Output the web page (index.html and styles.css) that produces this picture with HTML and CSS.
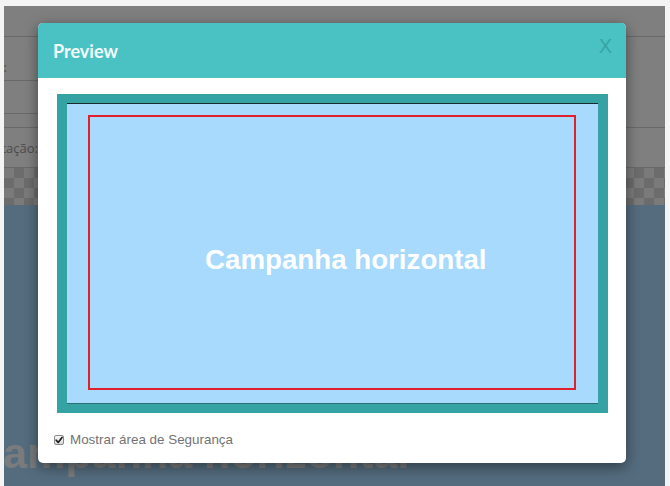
FILE: index.html
```html
<!DOCTYPE html>
<html lang="pt">
<head>
<meta charset="utf-8">
<title>Preview</title>
<link rel="stylesheet" href="styles.css">
</head>
<body>
<div class="app">
  <div class="page">
    <div class="topbar"></div>
    <div class="section-a">
      <div class="fields">
        <div class="field field-1"><span class="clip clip-1"><span>Nome:</span></span></div>
        <div class="field field-2"></div>
      </div>
    </div>
    <div class="section-b"><span class="clip clip-2"><span>Segmentação:</span></span></div>
    <div class="checker"></div>
    <div class="canvas"><div class="canvas-title">Campanha horizontal</div></div>
  </div>
  <div class="overlay">
    <div class="modal">
      <div class="modal-header">
        <h2 class="modal-title">Preview</h2>
        <span class="close">X</span>
      </div>
      <div class="modal-body">
        <div class="frame">
          <div class="stage">
            <div class="safe">
              <div class="title">Campanha horizontal</div>
            </div>
          </div>
        </div>
        <label class="option">
          <svg class="check" width="10" height="10" viewBox="0 0 10 10">
            <defs>
              <linearGradient id="cb" x1="0" y1="0" x2="0" y2="1">
                <stop offset="0" stop-color="#fafafa"/>
                <stop offset="1" stop-color="#d8d8d8"/>
              </linearGradient>
            </defs>
            <rect x="0.5" y="0.5" width="9" height="9" rx="1.5" fill="url(#cb)" stroke="#8a8a8a"/>
            <path d="M2.2 5.2 L4.2 7.4 L8 2.4" fill="none" stroke="#1e1e1e" stroke-width="1.7" stroke-linecap="round" stroke-linejoin="round"/>
          </svg>
          <span class="option-text">Mostrar área de Segurança</span>
        </label>
      </div>
    </div>
  </div>
</div>
</body>
</html>
```
FILE: styles.css
```css
html, body {
  margin: 0;
  padding: 0;
}
body {
  background: #f4f4f4;
  font-family: "Liberation Sans", Arial, sans-serif;
}
.app {
  position: relative;
  margin: 6px 5px 0 4px;
  height: 480px;
  overflow: hidden;
  background: #ffffff;
}
.page {
  display: flex;
  flex-direction: column;
  height: 100%;
}
.topbar {
  height: 30px;
  border-bottom: 1px solid #d2d2d2;
  flex: none;
}
.section-a {
  height: 90px;
  border-bottom: 1px solid #d2d2d2;
  flex: none;
}
.fields {
  width: 420px;
}
.field {
  border-bottom: 1px solid #d2d2d2;
  display: flex;
}
.field-1 {
  height: 43px;
  align-items: flex-end;
}
.field-2 {
  height: 32px;
}
.clip {
  display: flex;
  justify-content: flex-end;
  white-space: nowrap;
  font-family: "Open Sans", sans-serif;
  font-size: 13px;
  line-height: 15px;
  color: #9a9a9a;
}
.clip-1 {
  width: 3px;
  padding-bottom: 5px;
}
.section-b {
  height: 39px;
  border-bottom: 1px solid #d2d2d2;
  display: flex;
  align-items: center;
  flex: none;
}
.clip-2 {
  width: 34px;
  padding-top: 1px;
}
.checker {
  height: 37px;
  flex: none;
  background-color: #f4f4f4;
  background-image: conic-gradient(#d9d9d9 25%, transparent 0 50%, #d9d9d9 0 75%, transparent 0);
  background-size: 20px 20px;
}
.canvas {
  flex: 1;
  background: #a8d8fc;
  padding-top: 227px;
}
.canvas-title {
  margin-left: -32px;
  white-space: nowrap;
  font-family: "Liberation Sans", Arial, sans-serif;
  font-weight: bold;
  font-size: 43px;
  line-height: 43px;
  color: #f2f6fa;
}
.overlay {
  position: absolute;
  inset: 0;
  background: rgba(0, 0, 0, 0.5);
  padding: 17px 0 0 34px;
}
.modal {
  width: 588px;
  background: #ffffff;
  border-radius: 5px;
  box-shadow: 0 4px 14px rgba(0, 0, 0, 0.45);
}
.modal-header {
  height: 55px;
  background: #4ac2c4;
  border-radius: 5px 5px 0 0;
  display: flex;
  align-items: center;
  justify-content: space-between;
  padding: 0 14px 0 15px;
}
.modal-title {
  margin: 0;
  font-family: Lato, sans-serif;
  font-weight: bold;
  font-size: 18px;
  line-height: 22px;
  color: #f4fbfb;
}
.close {
  align-self: flex-start;
  margin-top: 13px;
  font-family: "Liberation Sans", Arial, sans-serif;
  font-size: 20px;
  line-height: 20px;
  color: #36a5a6;
}
.modal-body {
  padding: 16px 18px 17px 19px;
}
.frame {
  background: #35a3a3;
  padding: 9px 10px 10px 10px;
}
.stage {
  box-sizing: border-box;
  height: 300px;
  background: #a7dafd;
  border-top: 1px solid #1b2a2b;
  box-shadow: 0 1px 0 #2b6f73;
  padding: 11px 22px 0 21px;
}
.safe {
  box-sizing: border-box;
  height: 275px;
  border: 2px solid #e0202b;
  padding: 129px 0 0 115px;
}
.title {
  font-family: "Liberation Sans", Arial, sans-serif;
  font-weight: bold;
  font-size: 27.7px;
  line-height: 28px;
  color: #ffffff;
  white-space: nowrap;
}
.option {
  display: flex;
  align-items: center;
  gap: 6px;
  margin-top: 20px;
  margin-left: -3px;
  height: 13px;
}
.check {
  flex: none;
}
.option-text {
  font-family: "Liberation Sans", Arial, sans-serif;
  font-size: 13.4px;
  line-height: 13px;
  color: #737373;
}
```
